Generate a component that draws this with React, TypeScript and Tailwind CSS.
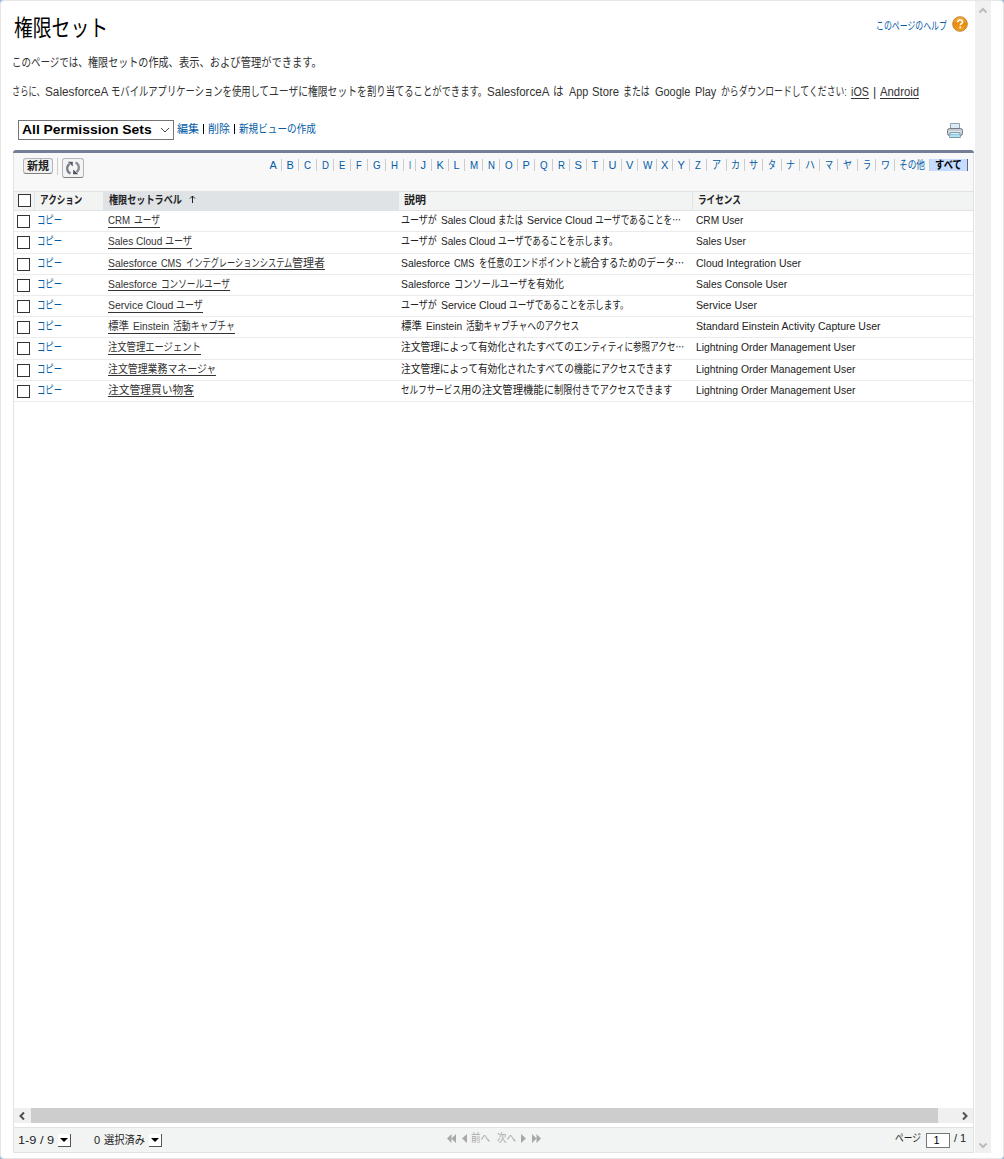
import { useLayoutEffect, useRef, useState } from "react";

/* Text set to a given width by condensing or widening its glyphs. */
function Fit({ t, w, className = "" }: { t: string; w: number; className?: string }) {
  const ref = useRef<HTMLSpanElement>(null);
  const [k, setK] = useState(1);
  useLayoutEffect(() => {
    if (ref.current) setK(w / ref.current.offsetWidth);
  }, [t, w]);
  return (
    <span className={`inline-block shrink-0 whitespace-nowrap ${className}`} style={{ width: w }}>
      <span ref={ref} className="inline-block origin-left whitespace-pre" style={{ transform: `scaleX(${k})` }}>
        {t}
      </span>
    </span>
  );
}

/* [text, width, gap after] */
type Run = [string, number, number?];

function Runs({ runs, className = "" }: { runs: Run[]; className?: string }) {
  return (
    <span className={`inline-flex shrink-0 whitespace-nowrap ${className}`}>
      {runs.map(([t, w, g], i) => (
        <span key={i} className="shrink-0" style={{ marginRight: g ?? 0 }}>
          <Fit t={t} w={w} />
        </span>
      ))}
    </span>
  );
}

type Row = { tall?: boolean; raised?: boolean; label: Run[]; desc: Run[]; license: Run };

const rows: Row[] = [
  {
    label: [["CRM", 22, 4], ["ユーザ", 26]],
    desc: [["ユーザが", 36, 4], ["Sales Cloud", 54, 3], ["または", 25, 4], ["Service Cloud", 65, 3], ["ユーザであることを⋯", 86]],
    license: ["CRM User", 47],
  },
  {
    tall: true,
    label: [["Sales Cloud", 54, 3], ["ユーザ", 27]],
    desc: [["ユーザが", 36, 4], ["Sales Cloud", 54, 3], ["ユーザであることを示します。", 120]],
    license: ["Sales User", 50],
  },
  {
    raised: true,
    label: [["Salesforce", 49, 4], ["CMS", 20, 5], ["インテグレーションシステム", 106], ["管理者", 33]],
    desc: [["Salesforce", 49, 4], ["CMS", 20, 5], ["を任意のエンドポイントと", 102], ["統合するためのデータ⋯", 103]],
    license: ["Cloud Integration User", 105],
  },
  {
    raised: true,
    label: [["Salesforce", 49, 4], ["コンソールユーザ", 69]],
    desc: [["Salesforce", 49, 4], ["コンソールユーザを有効化", 110]],
    license: ["Sales Console User", 91],
  },
  {
    label: [["Service Cloud", 65, 3], ["ユーザ", 27]],
    desc: [["ユーザが", 36, 4], ["Service Cloud", 65, 3], ["ユーザであることを示します。", 120]],
    license: ["Service User", 61],
  },
  {
    label: [["標準", 21, 4], ["Einstein", 36, 4], ["活動キャプチャ", 62]],
    desc: [["標準", 21, 4], ["Einstein", 36, 4], ["活動キャプチャへのアクセス", 113]],
    license: ["Standard Einstein Activity Capture User", 185],
  },
  {
    tall: true,
    label: [["注文管理エージェント", 93]],
    desc: [["注文管理によって有効化されたすべての", 173], ["エンティティに参照アクセ⋯", 110]],
    license: ["Lightning Order Management User", 159],
  },
  {
    raised: true,
    label: [["注文管理業務マネージャ", 108]],
    desc: [["注文管理によって有効化されたすべての", 173], ["機能にアクセスできます", 98]],
    license: ["Lightning Order Management User", 159],
  },
  {
    raised: true,
    label: [["注文管理買い物客", 86]],
    desc: [["セルフサービス", 60], ["用の注文管理機能に", 93], ["制限付きでアクセスできます", 118]],
    license: ["Lightning Order Management User", 159],
  },
];

/* [letter, cell width, glyph width] */
const index: [string, number, number][] = [
  ["A", 17, 7], ["B", 17, 7], ["C", 18, 7], ["D", 17, 7], ["E", 17, 6], ["F", 17, 6], ["G", 18, 8], ["H", 18, 7],
  ["I", 12, 2], ["J", 16, 6], ["K", 17, 7], ["L", 16, 6], ["M", 18, 8], ["N", 17, 7], ["O", 18, 8], ["P", 17, 7],
  ["Q", 18, 8], ["R", 17, 7], ["S", 17, 7], ["T", 17, 7], ["U", 18, 8], ["V", 16, 7], ["W", 19, 9], ["X", 16, 7],
  ["Y", 17, 7], ["Z", 17, 6], ["ア", 20, 9], ["カ", 18, 9], ["サ", 18, 9], ["タ", 19, 8], ["ナ", 18, 9], ["ハ", 20, 10],
  ["マ", 18, 8], ["ヤ", 20, 9], ["ラ", 18, 8], ["ワ", 19, 9], ["その他", 35, 26],
];

function Box() {
  return <span className="block h-[13px] w-[13px] shrink-0 border border-[#333] bg-white" />;
}

function Help() {
  return (
    <svg width="16" height="16" viewBox="0 0 16 16">
      <defs>
        <linearGradient id="help" x1="0" y1="0" x2="0" y2="1">
          <stop offset="0" stopColor="#f3b04b" />
          <stop offset="0.5" stopColor="#e88c0c" />
          <stop offset="1" stopColor="#f0a325" />
        </linearGradient>
      </defs>
      <circle cx="8" cy="8" r="7.3" fill="url(#help)" stroke="#bd7b25" strokeWidth="0.9" />
      <path d="M5.7 6.1c.1-1.4 1.1-2.1 2.4-2.1 1.400 0 2.400.8 2.400 2 0 1.600-2.200 1.700-2.200 3.300" fill="none" stroke="#fff" strokeWidth="1.6" />
      <rect x="7.400" y="10.500" width="1.800" height="1.800" fill="#fff" />
    </svg>
  );
}

function Printer() {
  return (
    <svg width="16" height="16" viewBox="0 0 16 16">
      <path d="M3.500 6.500v-6h9v6" fill="#dcebf5" stroke="#8ea3b3" />
      <rect x="0.500" y="5.500" width="15" height="7" rx="2" fill="#c3c9cf" stroke="#727c87" />
      <path d="M1.500 8.500h13" stroke="#e7eaed" />
      <path d="M3.500 9.500h9l1 5h-11z" fill="#e3f4fa" stroke="#7d99aa" />
      <path d="M4 11.500h8M4 13h8" stroke="#7ecbe5" strokeWidth="1" />
    </svg>
  );
}

function Refresh() {
  return (
    <svg width="16" height="16" viewBox="0 0 16 16">
      <path d="M5.500 13.300C1.500 12 1 6.500 4.500 3.800" fill="none" stroke="#7b7f8b" strokeWidth="2.300" />
      <path d="M2.800 1.800h5v4.700z" fill="#5a5e6c" />
      <path d="M10.500 2.700C14.500 4 15 9.500 11.500 12.200" fill="none" stroke="#8b8e98" strokeWidth="2.300" />
      <path d="M13.200 14.200h-5V9.500z" fill="#4c505c" />
    </svg>
  );
}

function Chevron({ d, color, size = 10, sw = 2 }: { d: string; color: string; size?: number; sw?: number }) {
  return (
    <svg width={size} height={size} viewBox="0 0 10 10">
      <path d={d} fill="none" stroke={color} strokeWidth={sw} />
    </svg>
  );
}

function DropButton() {
  return (
    <span className="flex h-[13px] w-[13px] shrink-0 items-center justify-center border-r border-b border-[#555] bg-white">
      <svg width="8" height="4" viewBox="0 0 8 4"><path d="M0 0h8L4 4z" fill="#000" /></svg>
    </span>
  );
}

function Divider() {
  return <span className="mt-[3px] mr-[4px] ml-[4px] h-[10px] w-px bg-black" />;
}

export default function App() {
  return (
    <div className="h-[1159px] w-[1004px] bg-[#9db9e2] font-['Liberation_Sans','Noto_Sans_CJK_JP',sans-serif] text-[11px] leading-[16px] text-[#222]">
      <div className="flex h-full w-full overflow-hidden rounded-[4px] border border-[#e7e7e7] bg-white">
        <main className="flex h-[1152px] w-[974px] shrink-0 flex-col">
          <header className="flex h-[48px] shrink-0 items-start justify-between pr-[7px] pl-[13px]">
            <h1 className="pt-[11px] text-[23px] leading-[32px] text-black"><Fit t="権限セット" w={94} /></h1>
            <div className="flex items-start pt-[15px] text-[#015ba7]">
              <Fit t="このページのヘルプ" w={71} className="mt-[2px] mr-[5px]" />
              <Help />
            </div>
          </header>
          <p className="h-[29px] shrink-0 pt-[6px] pl-[11px] text-[12.500px] text-[#333]">
            <Runs runs={[["このページでは、", 76], ["権限セットの作成、", 91], ["表示、および管理ができます。", 143]]} />
          </p>
          <p className="flex h-[42px] shrink-0 pt-[6px] pl-[11px] text-[12.500px] text-[#333]">
            <Runs
              runs={[
                ["さらに、", 33], ["SalesforceA", 63, 3], ["モバイルアプリケーションを使用して", 158], ["ユーザに権限セットを", 98],
                ["割り当てることができます。", 120, 0], ["SalesforceA", 62, 4], ["は", 11, 5], ["App", 19, 4], ["Store", 27, 4],
                ["または", 27, 5], ["Google", 35, 5], ["Play", 21, 5], ["からダウンロードしてください:", 126, 4],
              ]}
            />
            <span className="h-[15px] border-b border-[#333]"><Fit t="iOS" w={18} /></span>
            <span className="w-[11px] text-center">|</span>
            <span className="h-[15px] border-b border-[#333]"><Fit t="Android" w={39} /></span>
          </p>
          <div className="flex h-[30px] shrink-0 items-start pr-[12px] pl-[17px]">
            <div className="flex h-[20px] w-[156px] items-center justify-between border border-[#767676] bg-white pr-[3px] pl-[3px] text-[12.500px] font-bold text-black">
              <Fit t="All Permission Sets" w={130} />
              <Chevron d="M1 3l4 4 4-4" color="#444" sw={1} />
            </div>
            <div className="flex pt-px pl-[3px] text-[#015ba7]">
              <Fit t="編集" w={22} />
              <Divider />
              <Fit t="削除" w={22} />
              <Divider />
              <Fit t="新規ビューの作成" w={77} />
            </div>
            <div className="ml-auto pt-[3px]"><Printer /></div>
          </div>

          <section className="ml-[12px] flex h-[1003px] w-[961px] shrink-0 flex-col">
            <div className="h-[3px] shrink-0 rounded-t-[3px] bg-[#747e96]" />
            <div className="flex min-h-0 flex-1 flex-col border-x border-b border-[#dfe3e6]">
              <div className="flex h-[38px] shrink-0 items-start bg-[#f8f8f8] pr-[5px] pl-[9px]">
                <div className="mt-[5px] flex h-[16px] w-[30px] items-center justify-center rounded-[3px] border border-[#b5b5b5] border-b-[#7f7f7f] bg-[#f1f1f1] font-bold">
                  <Fit t="新規" w={22} />
                </div>
                <div className="mt-[5px] ml-[4px] h-[17px] w-px bg-[#ccc]" />
                <div className="mt-[5px] ml-[4px] flex h-[20px] w-[22px] items-center justify-center rounded-[3px] border border-[#b5b5b5] border-b-[#7f7f7f] bg-[#f4f4f4]">
                  <Refresh />
                </div>
                <nav className="mt-[6px] ml-auto flex h-[12px] leading-[12px] text-[#015ba7]">
                  {index.map(([t, w, g]) => (
                    <span key={t} className="flex justify-center border-r border-[#ccc]" style={{ width: w }}>
                      <Fit t={t} w={g} />
                    </span>
                  ))}
                  <span className="flex w-[38px] justify-center border-r border-[#667] bg-[#c3dcff] font-bold text-black">
                    <Fit t="すべて" w={27} />
                  </span>
                </nav>
              </div>

              <div className="flex h-[20px] shrink-0 border-y border-[#dfe3e6] bg-[#f2f4f3] font-bold">
                <div className="flex w-[21px] items-start border-r border-[#dfe3e6] pt-[2px] pl-[4px]"><Box /></div>
                <div className="w-[68px] pl-[5px]"><Fit t="アクション" w={42} /></div>
                <div className="flex w-[296px] bg-[#dfe3e6] pl-[6px]">
                  <Fit t="権限セットラベル" w={73} />
                  <svg className="mt-[3px] ml-[7px]" width="7" height="8" viewBox="0 0 7 8">
                    <path d="M3.500 8V1M1 3.500L3.500 1 6 3.500" fill="none" stroke="#222" />
                  </svg>
                </div>
                <div className="w-[294px] border-r border-[#dfe3e6] pl-[5px]"><Fit t="説明" w={22} /></div>
                <div className="pl-[5px]"><Fit t="ライセンス" w={43} /></div>
              </div>

              <div className="min-h-0 flex-1">
                {rows.map((r, i) => (
                  <div key={i} className={`flex border-b border-[#ebebeb] ${r.tall ? "h-[22px]" : "h-[21px]"}`}>
                    <div className="w-[23px] pt-[4px] pl-[3px]"><Box /></div>
                    <div className="w-[71px] pt-px text-[#015ba7]"><Fit t="コピー" w={25} /></div>
                    <div className="w-[293px] pt-px text-[#333]">
                      <Runs runs={r.label} className={`border-b border-[#333] ${r.raised ? "h-[15px]" : "h-[16px]"}`} />
                    </div>
                    <div className="w-[295px] pt-px"><Runs runs={r.desc} /></div>
                    <div className="pt-px"><Fit t={r.license[0]} w={r.license[1]} /></div>
                  </div>
                ))}
              </div>

              <div className="mb-[4px] flex h-[15px] shrink-0 items-center bg-[#f0f0f0]">
                <span className="flex w-[17px] justify-center pr-px"><Chevron d="M7 1.500L3.500 5 7 8.500" color="#505050" /></span>
                <span className="h-[15px] w-[907px] bg-[#cdcdcd]" />
                <span className="flex flex-1 justify-center pl-[18px]"><Chevron d="M3 1.500L6.500 5 3 8.500" color="#505050" /></span>
              </div>

              <footer className="flex h-[25px] shrink-0 items-center border-t border-[#dfe3e6] bg-[#f2f4f3] pl-[4px]">
                <Fit t="1-9 / 9" w={36} className="mr-[4px]" />
                <DropButton />
                <Fit t="0" w={6} className="mr-[4px] ml-[23px]" />
                <Fit t="選択済み" w={41} className="mr-[4px]" />
                <DropButton />
                <div className="ml-[285px] flex items-center pb-[4px] text-[#a8a8a8]">
                  <svg width="9" height="9" viewBox="0 0 9 9"><path d="M4.500 0v9L0 4.500zM9 0v9L4.500 4.500z" fill="#a8a8a8" /></svg>
                  <svg className="ml-[6px]" width="5" height="9" viewBox="0 0 5 9"><path d="M5 0v9L0 4.500z" fill="#a8a8a8" /></svg>
                  <Fit t="前へ" w={19} className="ml-[4px]" />
                  <Fit t="次へ" w={19} className="ml-[7px]" />
                  <svg className="ml-[5px]" width="5" height="9" viewBox="0 0 5 9"><path d="M0 0v9l5-4.500z" fill="#a8a8a8" /></svg>
                  <svg className="ml-[6px]" width="9" height="9" viewBox="0 0 9 9"><path d="M0 0v9l4.500-4.500zM4.500 0v9L9 4.500z" fill="#a8a8a8" /></svg>
                </div>
                <div className="ml-auto flex items-center pr-[7px]">
                  <Fit t="ページ" w={26} className="mr-[5px] mb-[4px]" />
                  <span className="flex h-[15px] w-[24px] items-center justify-center border border-[#767676] bg-white pr-[3px] text-black">1</span>
                  <Fit t="/ 1" w={12} className="mb-[4px] ml-[4px]" />
                </div>
              </footer>
            </div>
          </section>
        </main>

        <aside className="flex h-[1152px] w-[16px] shrink-0 flex-col items-center justify-between bg-[#f0f0f0] pt-[5px] pb-[3px]">
          <Chevron d="M1.500 6.500L5 3l3.500 3.500" color="#bcbcbc" />
          <Chevron d="M1.500 3.500L5 7l3.500-3.500" color="#bcbcbc" />
        </aside>
      </div>
    </div>
  );
}
